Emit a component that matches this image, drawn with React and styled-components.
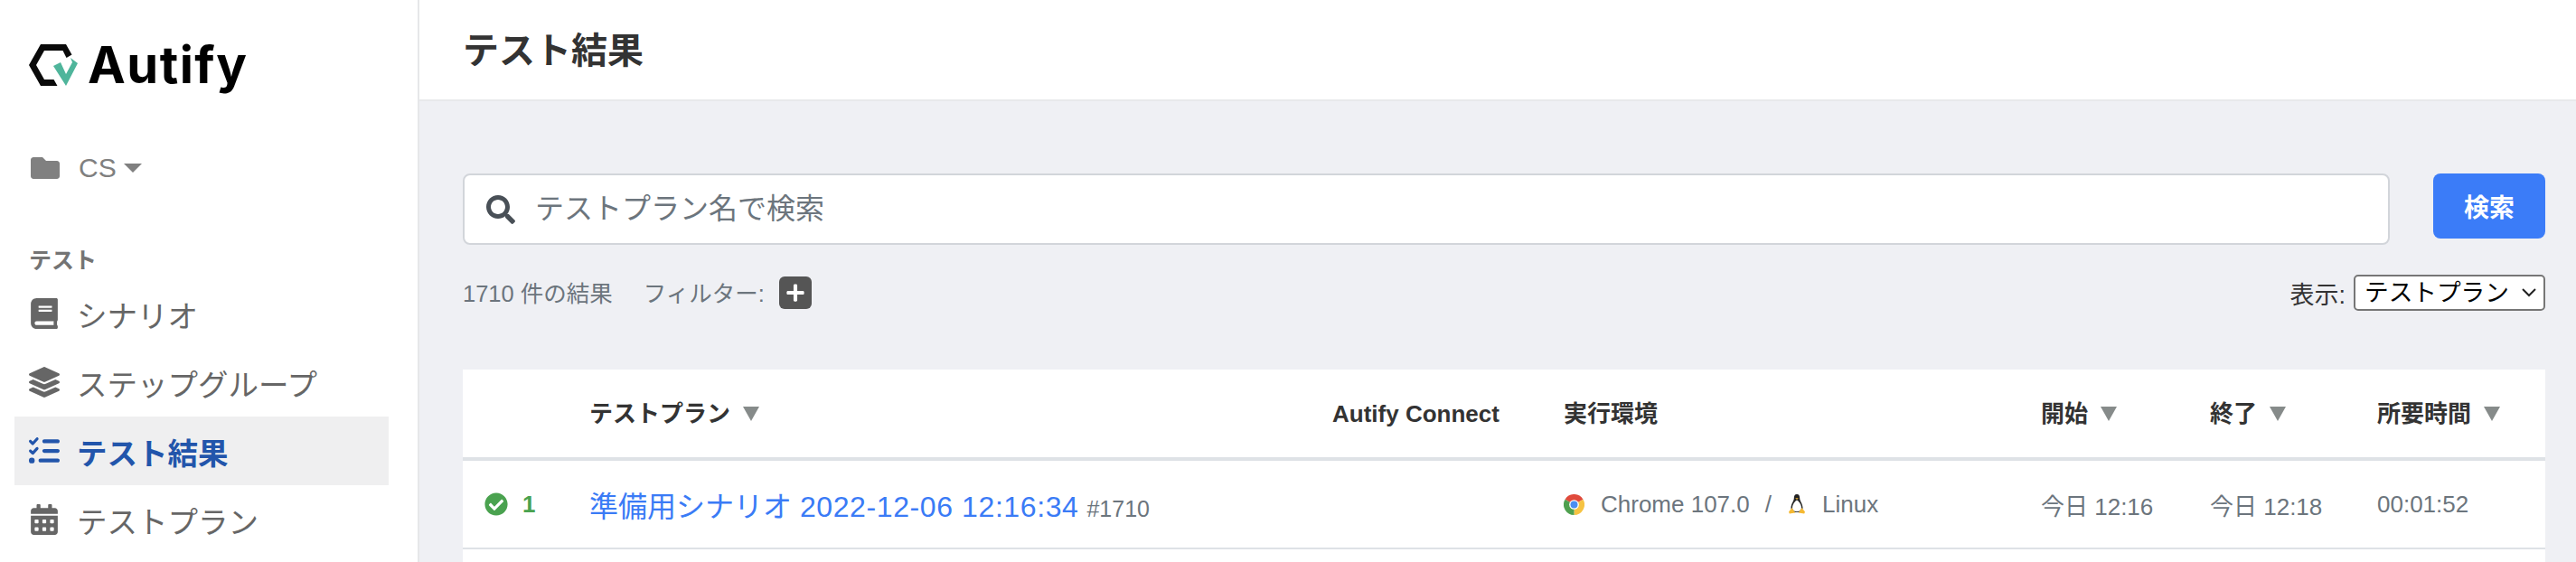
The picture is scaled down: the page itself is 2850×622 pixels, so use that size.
import React from "react";
import styled, { createGlobalStyle } from "styled-components";
import { FaBook, FaLayerGroup, FaCalendarAlt, FaFolder, FaSearch, FaPlus, FaCheckCircle } from "react-icons/fa";
import { FaListCheck } from "react-icons/fa6";

const GlobalStyle = createGlobalStyle`
  html, body {
    margin: 0;
    height: 622px;
    overflow: hidden;
    background: #fff;
    font-family: "Liberation Sans", "Noto Sans CJK JP", sans-serif;
    color: #333;
  }
`;

const Page = styled.div`
  display: flex;
  width: 2850px;
  height: 622px;
  overflow: hidden;
`;

const Sidebar = styled.aside`
  flex: 0 0 462px;
  box-sizing: content-box;
  background: #fff;
  border-right: 2px solid #e6e7e9;
`;

const LogoRow = styled.div`
  display: flex;
  align-items: center;
  gap: 9px;
  height: 64px;
  padding: 40px 0 0 32px;
`;

const LogoText = styled.span`
  font-family: "Inter", sans-serif;
  font-weight: 700;
  font-size: 56px;
  letter-spacing: 1.5px;
  line-height: 1;
  color: #000;
`;

const WorkspaceRow = styled.div`
  display: flex;
  align-items: center;
  height: 40px;
  margin-top: 62px;
  padding-left: 34px;
  color: #808080;
  font-size: 30px;
`;

const WorkspaceName = styled.span`
  margin-left: 21px;
`;

const Caret = styled.span`
  width: 0;
  height: 0;
  margin-left: 8px;
  border-left: 10px solid transparent;
  border-right: 10px solid transparent;
  border-top: 10px solid #808080;
`;

const SectionLabel = styled.div`
  margin-top: 64px;
  padding-left: 32px;
  height: 36px;
  line-height: 36px;
  font-size: 25px;
  font-weight: 700;
  color: #747474;
`;

const NavList = styled.nav`
  display: flex;
  flex-direction: column;
  margin-top: 3px;
`;

const NavItem = styled.div`
  display: flex;
  align-items: center;
  gap: 19px;
  height: 76px;
  margin: 0 32px 0 16px;
  padding-left: 16px;
  font-size: 33.5px;
  font-weight: ${(p) => (p.$active ? 700 : 400)};
  color: ${(p) => (p.$active ? "#2255ab" : "#666")};
  background: ${(p) => (p.$active ? "#efeff0" : "transparent")};
`;

const Main = styled.main`
  flex: 1;
  min-width: 0;
  background: #eff0f4;
`;

const TitleBar = styled.header`
  display: flex;
  align-items: center;
  height: 106px;
  padding: 0 0 4px 48px;
  background: #fff;
  border-bottom: 2px solid #e8e9eb;
  box-sizing: content-box;
`;

const Title = styled.h1`
  margin: 0;
  font-size: 40px;
  font-weight: 700;
  color: #333;
`;

const Content = styled.div`
  padding: 80px 34px 0 48px;
`;

const SearchRow = styled.div`
  display: flex;
  align-items: flex-start;
  gap: 48px;
`;

const SearchBox = styled.div`
  flex: 1;
  display: flex;
  align-items: center;
  gap: 22px;
  height: 79px;
  box-sizing: border-box;
  padding-left: 24px;
  background: #fff;
  border: 2px solid #d2d5da;
  border-radius: 8px;
  color: #495057;
`;

const SearchInput = styled.input`
  flex: 1;
  border: 0;
  outline: 0;
  padding: 0;
  font: inherit;
  font-size: 32px;
  background: transparent;
  &::placeholder {
    color: #6c757d;
    opacity: 1;
  }
`;

const SearchButton = styled.button`
  width: 124px;
  height: 72px;
  border: 0;
  border-radius: 8px;
  background: #3b7cf8;
  color: #fff;
  font: inherit;
  font-size: 28px;
  font-weight: 700;
`;

const FilterRow = styled.div`
  display: flex;
  align-items: center;
  height: 40px;
  margin-top: 33px;
  font-size: 25.5px;
  color: #6c757d;
`;

const FilterText = styled.span`
  margin: 0 0 4px ${(p) => p.$gap || 0}px;
`;

const AddFilter = styled.span`
  display: flex;
  align-items: center;
  justify-content: center;
  width: 36px;
  height: 36px;
  margin-left: 16px;
  border-radius: 6px;
  background: #555;
  color: #fff;
`;

const ViewPicker = styled.label`
  display: flex;
  align-items: center;
  gap: 9px;
  margin-left: auto;
  font-size: 27px;
  color: #333;
`;

const ViewSelect = styled.select`
  appearance: none;
  height: 40px;
  width: 212px;
  box-sizing: border-box;
  padding: 0 0 0 10px;
  border: 2px solid #767676;
  border-radius: 5px;
  font-family: inherit;
  font-size: 26.67px;
  color: #000;
  background: #fff url("data:image/svg+xml,%3Csvg xmlns='http://www.w3.org/2000/svg' width='18' height='12'%3E%3Cpath d='M2 2l7 7 7-7' fill='none' stroke='%23222' stroke-width='2'/%3E%3C/svg%3E") no-repeat right 7px center;
`;

const Table = styled.section`
  margin-top: 65px;
  padding-bottom: 40px;
  background: #fff;
`;

const Row = styled.div`
  display: grid;
  grid-template-columns: 140px 822px 256px 528px 187px 185px 185px;
  align-items: center;
  height: ${(p) => (p.$head ? "97px" : "96px")};
  border-bottom: ${(p) => (p.$head ? "4px" : "2px")} solid #dee2e6;
  box-sizing: content-box;
`;

const HeadCell = styled.div`
  display: flex;
  align-items: center;
  gap: 14px;
  font-size: 26px;
  line-height: 36px;
  font-weight: 700;
  color: #333;
`;

const SortArrow = styled.span`
  width: 0;
  height: 0;
  border-left: 9px solid transparent;
  border-right: 9px solid transparent;
  border-top: 16px solid #868b8a;
`;

const StatusCell = styled.div`
  display: flex;
  align-items: center;
  gap: 16px;
  padding-left: 24px;
  color: #4aa24f;
  font-size: 26px;
  font-weight: 700;
`;

const PlanCell = styled.div`
  display: flex;
  align-items: baseline;
  gap: 9px;
`;

const PlanLink = styled.a`
  font-size: 32px;
  color: #3a7bf6;
`;

const PlanDate = styled.span`
  letter-spacing: 0.6px;
`;

const RunId = styled.span`
  font-size: 25px;
  color: #6c757d;
`;

const BodyCell = styled.div`
  font-size: 26px;
  color: #6c757d;
`;

const EnvCell = styled(BodyCell)`
  display: flex;
  align-items: center;
`;

const EnvText = styled.span`
  display: flex;
  margin-left: ${(p) => p.$gap || 18}px;
`;

const ChromeIcon = () => (
  <svg width="23" height="23" viewBox="0 0 24 24">
    <path d="M12 12L1.6 6A12 12 0 0 1 22.4 6Z" fill="#e04a3c" />
    <path d="M12 12L22.4 6A12 12 0 0 1 12 24Z" fill="#f6c342" />
    <path d="M12 12L12 24A12 12 0 0 1 1.6 6Z" fill="#4fa04f" />
    <circle cx="12" cy="12" r="5.6" fill="#fff" />
    <circle cx="12" cy="12" r="4.2" fill="#4a8df2" />
  </svg>
);

const LinuxIcon = () => (
  <svg width="18" height="22" viewBox="0 0 18 22">
    <path d="M9 0C6.6 0 5.8 2 5.8 4.5C5.8 7.5 2.5 10.5 2.5 15C2.5 18 5 20 9 20C13 20 15.5 18 15.5 15C15.5 10.5 12.2 7.5 12.2 4.5C12.2 2 11.4 0 9 0Z" fill="#222" />
    <path d="M9 6.5C7.4 7.2 4 11 4 15C4 17.5 6.2 19.2 9 19.2C11.8 19.2 14 17.5 14 15C14 11 10.6 7.2 9 6.5Z" fill="#fff" />
    <path d="M7.2 4.2L10.8 4.2L9 6Z" fill="#f5b932" />
    <path d="M3.5 15L5.5 18L7.2 20.6L0.8 21.6L0 19.5Z" fill="#f5b932" />
    <path d="M14.5 15L12.5 18L10.8 20.6L17.2 21.6L18 19.5Z" fill="#f5b932" />
  </svg>
);

const Logo = () => (
  <svg width="56" height="48" viewBox="0 0 56 48">
    <path d="M0 24L13 1L41 1L47.5 12.5L41.5 16L37.5 8L17 8L8 24L17 40L27.5 40L31.5 47L13 47Z" fill="#0a0a0a" />
    <path d="M27 25L35 21L41 34L48 21L46 16L54 22L41 47Z" fill="#4fb59b" />
  </svg>
);

const heads = [
  { label: "", sort: false },
  { label: "テストプラン", sort: true },
  { label: "Autify Connect", sort: false },
  { label: "実行環境", sort: false },
  { label: "開始", sort: true },
  { label: "終了", sort: true },
  { label: "所要時間", sort: true },
];

export default function App() {
  return (
    <Page>
      <GlobalStyle />
      <Sidebar>
        <LogoRow>
          <Logo />
          <LogoText>Autify</LogoText>
        </LogoRow>
        <WorkspaceRow>
          <FaFolder size={32} />
          <WorkspaceName>CS</WorkspaceName>
          <Caret />
        </WorkspaceRow>
        <SectionLabel>テスト</SectionLabel>
        <NavList>
          <NavItem><FaBook size={34} />シナリオ</NavItem>
          <NavItem><FaLayerGroup size={34} />ステップグループ</NavItem>
          <NavItem $active><FaListCheck size={34} />テスト結果</NavItem>
          <NavItem><FaCalendarAlt size={34} />テストプラン</NavItem>
        </NavList>
      </Sidebar>
      <Main>
        <TitleBar>
          <Title>テスト結果</Title>
        </TitleBar>
        <Content>
          <SearchRow>
            <SearchBox>
              <FaSearch size={32} />
              <SearchInput placeholder="テストプラン名で検索" readOnly />
            </SearchBox>
            <SearchButton>検索</SearchButton>
          </SearchRow>
          <FilterRow>
            <FilterText>1710 件の結果</FilterText>
            <FilterText $gap={34}>フィルター:</FilterText>
            <AddFilter><FaPlus size={22} /></AddFilter>
            <ViewPicker>
              表示:
              <ViewSelect defaultValue="plan">
                <option value="plan">テストプラン</option>
              </ViewSelect>
            </ViewPicker>
          </FilterRow>
          <Table>
            <Row $head>
              {heads.map((h, i) => (
                <HeadCell key={i}>
                  {h.label}
                  {h.sort && <SortArrow />}
                </HeadCell>
              ))}
            </Row>
            <Row>
              <StatusCell><FaCheckCircle size={26} />1</StatusCell>
              <PlanCell>
                <PlanLink>準備用シナリオ <PlanDate>2022-12-06 12:16:34</PlanDate></PlanLink>
                <RunId>#1710</RunId>
              </PlanCell>
              <div />
              <EnvCell>
                <ChromeIcon />
                <EnvText>Chrome 107.0</EnvText>
                <EnvText $gap={17}>/</EnvText>
                <EnvText $gap={19}><LinuxIcon /></EnvText>
                <EnvText $gap={19}>Linux</EnvText>
              </EnvCell>
              <BodyCell>今日 12:16</BodyCell>
              <BodyCell>今日 12:18</BodyCell>
              <BodyCell>00:01:52</BodyCell>
            </Row>
          </Table>
        </Content>
      </Main>
    </Page>
  );
}
